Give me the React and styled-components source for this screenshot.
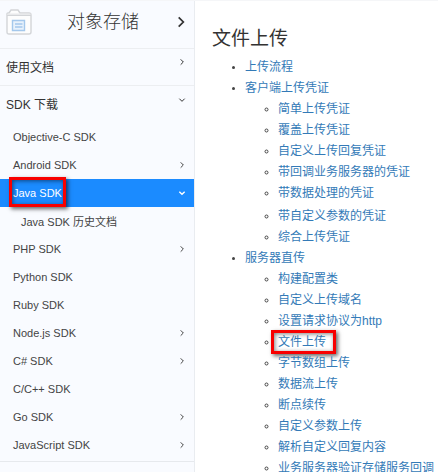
import React from "react";
import styled, { createGlobalStyle, css } from "styled-components";

const GlobalStyle = createGlobalStyle`
  * { box-sizing: border-box; }
  html { height: 100%; overflow: hidden; }
  body {
    margin: 0;
    background: #fff;
    color: #333;
    font-family: "Liberation Sans", "Noto Sans CJK SC", sans-serif;
    font-size: 12px;
  }
  button { font: inherit; color: inherit; background: none; border: 0; cursor: pointer; text-align: left; }
  a { text-decoration: none; }
`;

const Page = styled.div`
  display: grid;
  grid-template-columns: 195px minmax(0, 1fr);
  min-height: 100vh;
  border-top: 1px solid #f5f6f8;
`;

const Sidebar = styled.nav`
  background: #f9fbff;
  border-right: 1px solid #e9ecf0;
`;

const rowLayout = css`
  display: flex;
  align-items: center;
  justify-content: space-between;
  width: 100%;
  padding: 0 8px 0 6px;
`;

const ProductHeader = styled.button`
  ${rowLayout}
  height: 48px;
  padding-bottom: 6px;
  padding-right: 6px;
  border-bottom: 1px solid #eceef1;
`;

const ProductName = styled.span`
  font-size: 18px;
  font-weight: 300;
  line-height: 24px;
  color: #333;
`;

const SectionButton = styled.button`
  ${rowLayout}
  height: 37px;
  padding-bottom: 2px;
  border-bottom: ${(p) => (p.$divided ? "1px solid #eceef1" : "0")};

  svg {
    margin-bottom: 8px;
  }
`;

const SdkList = styled.ul`
  list-style: none;
  margin: 0;
  padding: 0 0 2px;
  border-bottom: 1px solid #e6e9ed;
`;

const SdkLink = styled.a`
  ${rowLayout}
  height: 28px;
  padding-left: ${(p) => (p.$nested ? "21px" : "13px")};
  font-size: 11px;
  color: ${(p) => (p.$active ? "#fff" : "#444")};
  background: ${(p) => (p.$active ? "#1b8bff" : "transparent")};
`;

const Marked = styled.span`
  position: relative;
`;

const Highlight = styled.span`
  position: absolute;
  inset: ${(p) => p.$inset};
  border: 3px solid #f80000;
  box-shadow: 2px 2px 4px rgba(0, 0, 0, 0.6), inset 1px 1px 4px rgba(0, 0, 0, 0.5);
  pointer-events: none;
`;

const Content = styled.main`
  padding: 24px 0 0 17px;
`;

const Title = styled.h1`
  margin: 0;
  font-size: 19px;
  font-weight: 400;
  line-height: 28px;
  color: #333;
`;

const Outline = styled.ul`
  margin: ${(p) => (p.$nested ? "0" : "4px 0 0")};
  padding-left: 33px;
  list-style: ${(p) => (p.$nested ? "circle" : "disc")};
`;

const OutlineItem = styled.li`
  margin-top: ${(p) => (p.$spaced ? "2px" : "0")};
  line-height: 21px;
  white-space: nowrap;

  &::marker {
    font-size: 10px;
    color: #444;
  }
`;

const OutlineLink = styled.a`
  color: #337ab7;
`;

const CHEVRONS = {
  right: "M4 2 8 6 4 10",
  down: "M2 4 6 8 10 4",
};

function Chevron({ direction = "right", size = 8, weight = 1.5 }) {
  return (
    <svg width={size} height={size} viewBox="0 0 12 12" fill="none" stroke="currentColor" strokeWidth={weight} aria-hidden="true">
      <path d={CHEVRONS[direction]} />
    </svg>
  );
}

function FolderIcon() {
  return (
    <svg width="26" height="26" viewBox="0 0 26 26" fill="none" aria-hidden="true">
      <path d="M1 23V5q0-1 1-1h1l2-3h7l2 3h9q2 0 2 2v17q0 2-2 2H3q-2 0-2-2Z" fill="#fdfdfd" stroke="#d3d5d8" strokeWidth="1.400" />
      <path d="M1.500 4.500h23v2h-23z" fill="#e8e9eb" />
      <path d="M1 6.500h24" stroke="#d3d5d8" strokeWidth="1" />
      <path d="M6.500 11.500h12v10h-12z" fill="#e8f2fc" stroke="#a4c8ec" strokeWidth="1.400" />
      <path d="M9 15h7.500M9 18h7.500" stroke="#a4c8ec" strokeWidth="1.300" />
    </svg>
  );
}

const SDKS = [
  { name: "Objective-C SDK" },
  { name: "Android SDK", arrow: "right" },
  { name: "Java SDK", arrow: "down", active: true },
  { name: "Java SDK 历史文档", nested: true },
  { name: "PHP SDK", arrow: "right" },
  { name: "Python SDK" },
  { name: "Ruby SDK" },
  { name: "Node.js SDK", arrow: "right" },
  { name: "C# SDK", arrow: "right" },
  { name: "C/C++ SDK" },
  { name: "Go SDK", arrow: "right" },
  { name: "JavaScript SDK", arrow: "right" },
];

const TOPICS = [
  { name: "上传流程" },
  {
    name: "客户端上传凭证",
    children: [
      { name: "简单上传凭证" },
      { name: "覆盖上传凭证" },
      { name: "自定义上传回复凭证" },
      { name: "带回调业务服务器的凭证" },
      { name: "带数据处理的凭证" },
      { name: "带自定义参数的凭证", spaced: true },
      { name: "综合上传凭证" },
    ],
  },
  {
    name: "服务器直传",
    children: [
      { name: "构建配置类" },
      { name: "自定义上传域名" },
      { name: "设置请求协议为http" },
      { name: "文件上传", marked: true },
      { name: "字节数组上传" },
      { name: "数据流上传" },
      { name: "断点续传" },
      { name: "自定义参数上传" },
      { name: "解析自定义回复内容" },
      { name: "业务服务器验证存储服务回调" },
    ],
  },
];

function TopicList({ topics, nested = false }) {
  return (
    <Outline $nested={nested}>
      {topics.map((topic) => (
        <OutlineItem key={topic.name} $spaced={topic.spaced}>
          <Marked>
            <OutlineLink href="#">{topic.name}</OutlineLink>
            {topic.marked && <Highlight $inset="-5px -10px -5px -7px" />}
          </Marked>
          {topic.children && <TopicList topics={topic.children} nested />}
        </OutlineItem>
      ))}
    </Outline>
  );
}

export default function App() {
  return (
    <>
      <GlobalStyle />
      <Page>
        <Sidebar>
          <ProductHeader type="button">
            <FolderIcon />
            <ProductName>对象存储</ProductName>
            <Chevron size={14} weight={1.5} />
          </ProductHeader>
          <SectionButton type="button" $divided>
            使用文档
            <Chevron />
          </SectionButton>
          <SectionButton type="button" aria-expanded="true">
            SDK 下载
            <Chevron direction="down" />
          </SectionButton>
          <SdkList>
            {SDKS.map((sdk) => (
              <li key={sdk.name}>
                <SdkLink href="#" $active={sdk.active} $nested={sdk.nested}>
                  <Marked>
                    {sdk.name}
                    {sdk.active && <Highlight $inset="-10px -4px -8px -4px" />}
                  </Marked>
                  {sdk.arrow && <Chevron direction={sdk.arrow} weight={sdk.active ? 2 : 1.5} />}
                </SdkLink>
              </li>
            ))}
          </SdkList>
        </Sidebar>
        <Content>
          <Title>文件上传</Title>
          <TopicList topics={TOPICS} />
        </Content>
      </Page>
    </>
  );
}
